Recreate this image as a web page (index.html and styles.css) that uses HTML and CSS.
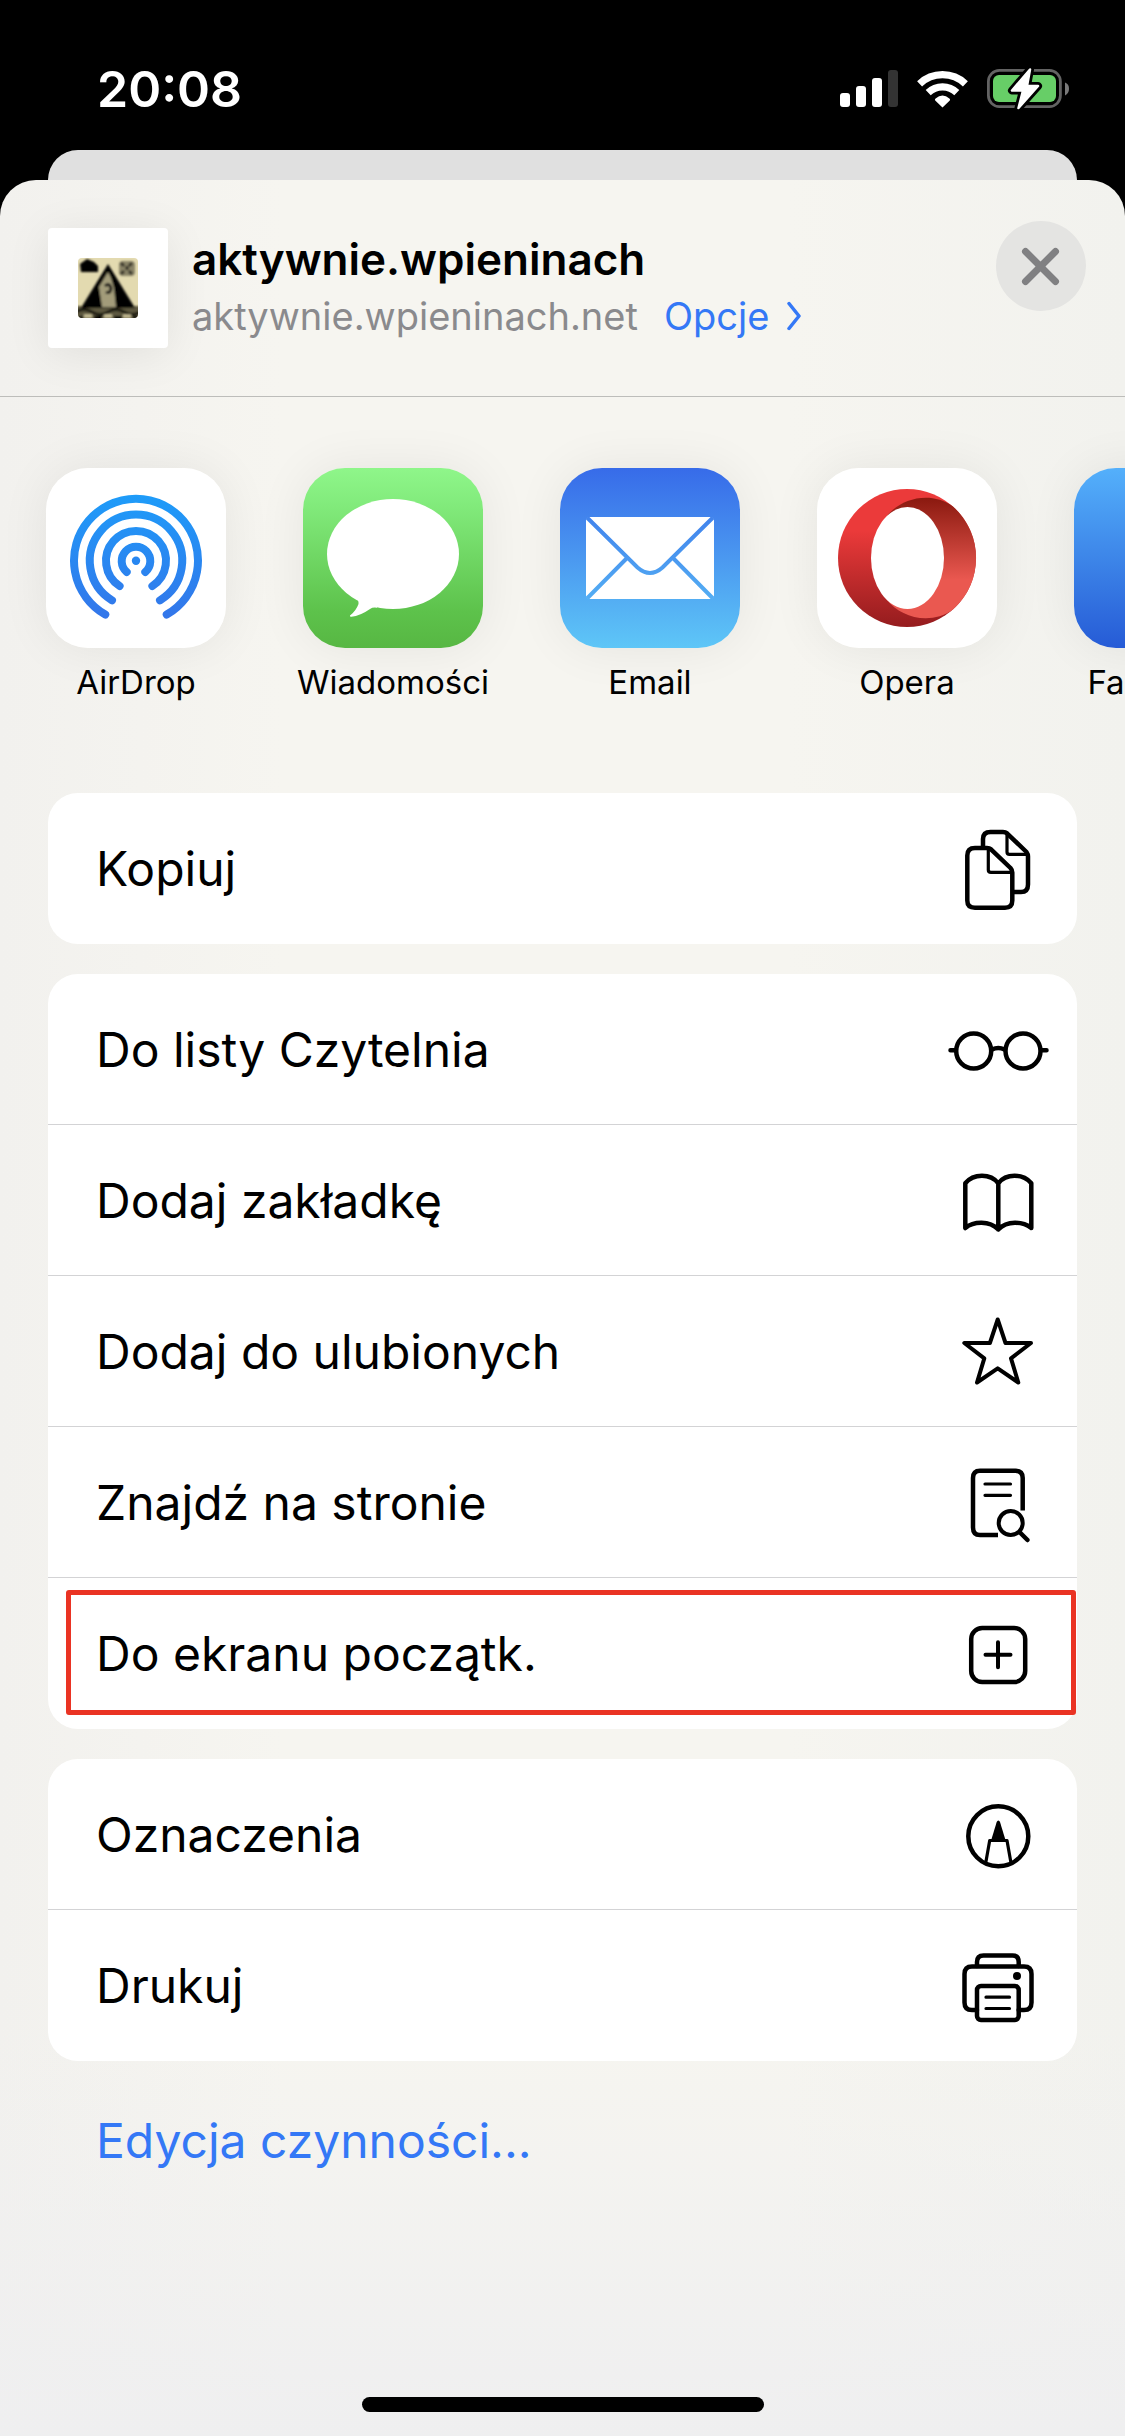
FILE: index.html
```html
<!DOCTYPE html>
<html lang="pl">
<head>
<meta charset="utf-8">
<meta name="viewport" content="width=device-width, initial-scale=1">
<title>aktywnie.wpieninach</title>
<link rel="stylesheet" href="styles.css">
</head>
<body>
<div class="status-bar">
  <time class="clock">20:08</time>
  <div class="status-icons">
    <svg width="58" height="38" viewBox="0 0 58 38" role="img" aria-label="Zasięg">
      <g fill="#fff"><rect y="23" width="10" height="14" rx="3"/><rect x="16" y="16" width="10" height="21" rx="3"/><rect x="32" y="8" width="10" height="29" rx="3"/></g>
      <rect x="48" width="10" height="37" rx="3" fill="#333"/>
    </svg>
    <svg width="51" height="38" viewBox="0 0 51 38" role="img" aria-label="Wi-Fi">
      <g fill="none" stroke="#fff" stroke-width="7.2"><path d="M2.6 13.8A33.3 33.3 0 0 1 48.4 13.8"/><path d="M11.2 22.6A20.6 20.6 0 0 1 39.8 22.6"/></g>
      <path d="M25.5 37.4L18.2 30.4Q17.4 29.2 18.6 28.4Q25.5 22.800 32.400 28.400Q33.600 29.200 32.800 30.400Z" fill="#fff"/>
    </svg>
    <svg width="82" height="42" viewBox="0 0 82 42" role="img" aria-label="Ładowanie">
      <rect x="1.400" y="2.400" width="72" height="36.200" rx="11" fill="none" stroke="#636363" stroke-width="2.800"/>
      <rect x="6" y="7" width="63" height="27" rx="6" fill="#67ce67"/>
      <path d="M78 14.500Q82 16 82 20.700T78 27.500Z" fill="#7a7a7a"/>
      <path d="M43 1.500L25 22.500H36L31.500 40L51 18H40Z" fill="#000" stroke="#000" stroke-width="8" stroke-linejoin="round"/>
      <path d="M43 1.500L25 22.500H36L31.500 40L51 18H40Z" fill="#fff" stroke="#fff" stroke-width="2.500" stroke-linejoin="round"/>
    </svg>
  </div>
</div>
<div class="page-behind"></div>
<main class="sheet">
  <header class="sheet-header">
    <div class="site">
      <div class="thumb">
        <svg width="60" height="60" viewBox="0 0 60 60" aria-hidden="true">
          <defs>
            <clipPath id="fav"><rect width="60" height="60" rx="4"/></clipPath>
            <filter id="soft"><feGaussianBlur stdDeviation="1.3"/></filter>
          </defs>
          <g clip-path="url(#fav)">
            <rect width="60" height="60" fill="#e3dab0"/>
            <g filter="url(#soft)">
              <path d="M2 6L9 1L16 4L20 8V14H3Z" fill="#000"/>
              <rect x="41" y="3" width="16" height="15" rx="4" fill="#8a8468"/>
              <path d="M43 5l3 3M54 5l-3 3M43 16l3-3M54 16l-3-3M49 8v4" stroke="#2e2b20" stroke-width="3"/>
              <rect x="-3" y="48" width="66" height="14" fill="#5d583f"/>
              <path d="M30 6L3 50H57Z" fill="#000"/>
              <path d="M30 14L21 29L24 49H38L36 30L33 20Z" fill="#a39c7a"/>
              <path d="M27 28q5-4 6 3q-1 5-5 3" stroke="#111" stroke-width="3" fill="none"/>
              <path d="M-2 54q8-5 16 0t16 0t16 0t16 0" fill="none" stroke="#17150d" stroke-width="3"/>
              <path d="M6 58h8M26 58h8M45 58h8" stroke="#cfc69c" stroke-width="3"/>
              <path d="M-1 60h6M16 60h8M36 60h8M55 60h6" stroke="#000" stroke-width="4"/>
            </g>
          </g>
        </svg>
      </div>
      <div class="site-text">
        <h1 class="site-title">aktywnie.wpieninach</h1>
        <p class="site-sub"><span>aktywnie.wpieninach.net</span>
          <a class="options" href="#opcje">Opcje
            <svg width="15" height="30" viewBox="0 0 15 30" aria-hidden="true"><path d="M2 2.500L12 15L2 27.500" fill="none" stroke="#3478f6" stroke-width="3.500" stroke-linecap="round" stroke-linejoin="round"/></svg>
          </a>
        </p>
      </div>
    </div>
    <button class="close" type="button" aria-label="Zamknij">
      <svg width="90" height="90" viewBox="0 0 90 90" aria-hidden="true"><path d="M29.500 30.500L59.500 60.500M59.500 30.500L29.500 60.500" stroke="#808082" stroke-width="7" stroke-linecap="round"/></svg>
    </button>
  </header>

  <nav class="apps" aria-label="Aplikacje">
    <a class="app" href="#airdrop">
      <svg class="app-icon" viewBox="0 0 180 180" aria-hidden="true">
        <defs><linearGradient id="air" gradientUnits="userSpaceOnUse" x1="0" y1="26" x2="0" y2="150"><stop stop-color="#1e9cf9"/><stop offset="1" stop-color="#3376ea"/></linearGradient></defs>
        <rect width="180" height="180" fill="#fff"/>
        <g fill="none" stroke="url(#air)" stroke-width="8" stroke-linecap="round">
          <path d="M59.300 146.500A62 62 0 1 1 120.700 146.500"/>
          <path d="M66 132.300A46.200 46.200 0 1 1 114 132.300"/>
          <path d="M73.600 118A30 30 0 1 1 106.400 118"/>
          <path d="M80.700 104A14.300 14.300 0 1 1 99.300 104"/>
        </g>
        <circle cx="90" cy="92.700" r="4.200" fill="#2787f1"/>
      </svg>
      <span class="app-label">AirDrop</span>
    </a>
    <a class="app" href="#wiadomosci">
      <svg class="app-icon" viewBox="0 0 180 180" aria-hidden="true">
        <defs><linearGradient id="msg" x2="0" y2="1"><stop stop-color="#8ff68a"/><stop offset=".2" stop-color="#82eb7c"/><stop offset=".8" stop-color="#5dc24b"/><stop offset="1" stop-color="#57b743"/></linearGradient></defs>
        <rect width="180" height="180" fill="url(#msg)"/>
        <ellipse cx="90" cy="86" rx="66" ry="55" fill="#fff"/>
        <path d="M52 129Q56 132 55.500 136Q53 143 47 147.500Q46.500 149 48.500 148.800Q57 148 67 141Q70 139 74 139.800L80 125Z" fill="#fff"/>
      </svg>
      <span class="app-label">Wiadomości</span>
    </a>
    <a class="app" href="#email">
      <svg class="app-icon" viewBox="0 0 180 180" aria-hidden="true">
        <defs><linearGradient id="mail" gradientUnits="userSpaceOnUse" x1="0" y1="0" x2="0" y2="180"><stop stop-color="#376be9"/><stop offset="1" stop-color="#5ec6f7"/></linearGradient></defs>
        <rect width="180" height="180" fill="url(#mail)"/>
        <rect x="26" y="49" width="128" height="82" rx="4" fill="#fff"/>
        <g fill="none" stroke="url(#mail)" stroke-width="4">
          <path d="M27 49.500L77.500 99.500Q90 110.500 102.500 99.500L153 49.500"/>
          <path d="M27 130.500L67 90M153 130.500L113 90"/>
        </g>
      </svg>
      <span class="app-label">Email</span>
    </a>
    <a class="app" href="#opera">
      <svg class="app-icon" viewBox="0 0 180 180" aria-hidden="true">
        <defs>
          <linearGradient id="op1" x2="0" y2="1"><stop offset=".3" stop-color="#eb3a3a"/><stop offset="1" stop-color="#951c1e"/></linearGradient>
          <linearGradient id="op2" x2="0" y2="1"><stop stop-color="#8a190f"/><stop offset=".68" stop-color="#ea5850"/><stop offset="1" stop-color="#ea5850"/></linearGradient>
        </defs>
        <rect width="180" height="180" fill="#fff"/>
        <circle cx="90" cy="90" r="69" fill="url(#op1)"/>
        <path d="M70 48C83 31 113 22 136 38.500A69 69 0 0 1 136 141.500C113 158 83 149 70 132Z" fill="url(#op2)"/>
        <ellipse cx="90.500" cy="90" rx="36.500" ry="51" fill="#fff"/>
      </svg>
      <span class="app-label">Opera</span>
    </a>
    <a class="app" href="#facebook">
      <svg class="app-icon" viewBox="0 0 180 180" aria-hidden="true">
        <defs><linearGradient id="fb" x2="0" y2="1"><stop stop-color="#54b0fb"/><stop offset="1" stop-color="#265bd6"/></linearGradient></defs>
        <rect width="180" height="180" fill="url(#fb)"/>
      </svg>
      <span class="app-label">Facebook</span>
    </a>
  </nav>

  <div class="actions">
    <div class="group">
      <button class="row" type="button"><span>Kopiuj</span>
        <svg class="glyph" viewBox="0 0 102 102" aria-hidden="true">
          <path d="M28 31H40Q42.500 31 44 32.300L63.500 51Q65.300 53 65.300 55.500V83.500Q65.300 90.700 58 90.700H28Q20.300 90.700 20.300 83.500V38.500Q20.300 31 28 31Z"/>
          <path class="fine" d="M41.300 32V53Q41.300 55.300 44 55.300H65M60 17V35Q60 37.300 62.500 37.300H80"/>
          <path d="M36 30V22Q36 15 43.500 15H56Q58.500 15 60 16.300L79.500 35Q81 37 81 39.500V67.500Q81 75 74 75H67"/>
        </svg></button>
    </div>
    <div class="group">
      <button class="row" type="button"><span>Do listy Czytelnia</span>
        <svg class="glyph" viewBox="0 0 102 102" aria-hidden="true">
          <circle cx="26.700" cy="53" r="17.500"/><circle cx="76" cy="53" r="17.500"/>
          <path d="M3.500 52.300H8M95 52.300H99.500M45 51.500Q51.300 48.500 57.500 51.500"/>
        </svg></button>
      <button class="row" type="button"><span>Dodaj zakładkę</span>
        <svg class="glyph" viewBox="0 0 102 102" aria-hidden="true">
          <path d="M18.300 34.300C26.500 24.300 43.500 24.300 51.300 34.300C59 24.300 76 24.300 84.300 34.300V79C76 72.300 60 71.500 51.300 80.500C42.500 71.500 26.500 72.300 18.300 79ZM51.300 34.300V80.500"/>
        </svg></button>
      <button class="row" type="button"><span>Dodaj do ulubionych</span>
        <svg class="glyph" viewBox="0 0 102 102" aria-hidden="true">
          <path class="thin" d="M50.700 19.500L58.500 43H84L64 58.300L71.300 82.500L50.700 68.300L30 82.500L37.300 58.300L17.300 43H42.900Z"/>
        </svg></button>
      <button class="row" type="button"><span>Znajdź na stronie</span>
        <svg class="glyph" viewBox="0 0 102 102" aria-hidden="true">
          <path class="flat" d="M75.700 59.500V27Q75.700 19.700 68.500 19.700H33Q26 19.700 26 27V76.500Q26 84 33 84H51"/>
          <path class="fine" d="M38 33H63.500M38 44.300H63.500"/>
          <circle class="thin" cx="63.700" cy="72" r="12"/>
          <path d="M73 81.500L80.500 89"/>
        </svg></button>
      <button class="row marked" type="button"><span>Do ekranu początk.</span>
        <svg class="glyph" viewBox="0 0 102 102" aria-hidden="true">
          <rect x="24.200" y="26" width="54" height="54" rx="11"/>
          <path class="thin" d="M38.500 52.800H63.500M51 40.300V65.300"/>
        </svg></button>
    </div>
    <div class="group">
      <button class="row" type="button"><span>Oznaczenia</span>
        <svg class="glyph" viewBox="0 0 102 102" aria-hidden="true">
          <circle cx="51.300" cy="53.300" r="30"/>
          <path class="fine" d="M38.700 80L42.700 57.500H60L64 80"/>
          <path d="M51.300 37.500Q52.500 37.500 53 39L59 58.700H43.700L49.700 39Q50.200 37.500 51.300 37.500Z" fill="#000" stroke="none"/>
        </svg></button>
      <button class="row" type="button"><span>Drukuj</span>
        <svg class="glyph" viewBox="0 0 102 102" aria-hidden="true">
          <path d="M30 32V28Q30 21.500 36.500 21.500H65.500Q71.700 21.500 71.700 28V32"/>
          <path d="M30 76H25Q17.500 76 17.500 68.500V40Q17.500 32.500 25 32.500H77Q84.500 32.500 84.500 40V68.500Q84.500 76 77 76H71.700"/>
          <rect x="30" y="52" width="41.700" height="34" rx="4"/>
          <path class="fine" d="M39 63.200H62.500M39 74.500H62.500"/>
          <circle cx="70" cy="42" r="4" fill="#000" stroke="none"/>
        </svg></button>
    </div>
  </div>
  <a class="edit" href="#edycja">Edycja czynności...</a>
  <div class="home-indicator"></div>
</main>
</body>
</html>
```
FILE: styles.css
```css
* { box-sizing: border-box; }
body {
  margin: 0;
  min-height: 100vh;
  display: flex;
  flex-direction: column;
  background: #000;
  color: #000;
  font-family: Inter, "Liberation Sans", sans-serif;
  font-size: 48px;
  overflow-x: hidden;
}
a { color: inherit; text-decoration: none; }
button { font: inherit; color: inherit; border: 0; padding: 0; background: none; }
svg { display: block; flex: none; }

.status-bar {
  height: 150px;
  padding: 28px 56px 0 97px;
  display: flex;
  align-items: center;
  justify-content: space-between;
  color: #fff;
}
.clock { font-size: 50px; font-weight: 600; }
.status-icons { display: flex; align-items: center; gap: 19px; }

.page-behind {
  height: 30px;
  margin: 0 48px;
  background: #e0e0e0;
  border-radius: 30px 30px 0 0;
}

.sheet {
  flex: 1;
  display: flex;
  flex-direction: column;
  overflow: hidden;
  border-radius: 36px 36px 0 0;
  background:
    linear-gradient(to bottom, transparent 82%, #efeff0 100%),
    linear-gradient(to right, #f2f1ee, #f6f5f0 25%, #f6f5f0 70%, #f2f2ee);
}

.sheet-header {
  display: flex;
  align-items: flex-start;
  justify-content: space-between;
  padding: 41px 39px 48px 48px;
  border-bottom: 1px solid #bdbdba;
}
.site { display: flex; align-items: center; gap: 24px; padding-top: 7px; }
.thumb {
  width: 120px;
  height: 120px;
  display: grid;
  place-items: center;
  background: #fff;
  border-radius: 4px;
  box-shadow: 0 6px 45px rgba(0, 0, 0, .08);
}
.site-title { margin: 0; font-size: 44px; line-height: 56px; font-weight: 600; }
.site-sub {
  margin: 0;
  display: flex;
  gap: 26px;
  font-size: 38px;
  line-height: 58px;
  color: #8a8a8d;
}
.options { display: flex; align-items: center; gap: 18px; color: #3478f6; }
.close { width: 90px; height: 90px; border-radius: 50%; background: #e4e4e2; }

.apps {
  display: flex;
  gap: 77px;
  padding: 71px 0 91px 46px;
  overflow: hidden;
}
.app {
  flex: none;
  width: 180px;
  display: flex;
  flex-direction: column;
  align-items: center;
  gap: 14px;
}
.app-icon {
  width: 180px;
  height: 180px;
  border-radius: 42px;
  box-shadow: 0 0 50px rgba(0, 0, 0, .07);
}
.app-label { font-size: 33px; line-height: 40px; white-space: nowrap; }

.actions { display: flex; flex-direction: column; gap: 30px; padding: 0 48px; }
.group { border-radius: 30px; background: #fff; }
.row {
  position: relative;
  width: 100%;
  height: 151px;
  padding: 0 28px 0 48px;
  display: flex;
  align-items: center;
  justify-content: space-between;
  border-bottom: 1px solid #d3d3d5;
  text-align: left;
}
.row:last-child { border-bottom-color: transparent; }
.marked::after {
  content: "";
  position: absolute;
  inset: 12px 1px 13px 18px;
  border: 5px solid #ea3323;
  border-radius: 3px;
}
.glyph {
  width: 102px;
  height: 102px;
  fill: none;
  stroke: #000;
  stroke-width: 4.5;
  stroke-linecap: round;
  stroke-linejoin: round;
}
.thin { stroke-width: 4; }
.fine { stroke-width: 3.2; }
.flat { stroke-linecap: butt; }

.edit { align-self: flex-start; margin: 50px 0 0 96px; line-height: 60px; color: #3478f6; }
.home-indicator {
  width: 402px;
  height: 15px;
  margin: auto auto 24px;
  border-radius: 8px;
  background: #000;
}
```
